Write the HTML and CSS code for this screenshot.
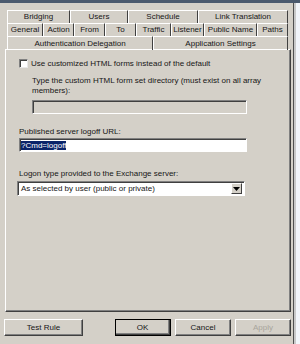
FILE: index.html
```html
<!DOCTYPE html>
<html>
<head>
    <meta charset="UTF-8">
    <title>Application Settings</title>
    <link rel="stylesheet" href="styles.css">
</head>
<body>
    <div class="titlebar"></div>
    <div class="screen">
        <div class="dialog">
            <div class="tabs">
                <div class="tabrow">
                    <div class="tab t-bridging">Bridging</div>
                    <div class="tab t-users">Users</div>
                    <div class="tab t-schedule">Schedule</div>
                    <div class="tab t-link">Link Translation</div>
                </div>
                <div class="tabrow">
                    <div class="tab t-general">General</div>
                    <div class="tab t-action">Action</div>
                    <div class="tab t-from">From</div>
                    <div class="tab t-to">To</div>
                    <div class="tab t-traffic">Traffic</div>
                    <div class="tab t-listener">Listener</div>
                    <div class="tab t-public">Public Name</div>
                    <div class="tab t-paths">Paths</div>
                </div>
                <div class="tabrow front">
                    <div class="tab t-auth">Authentication Delegation</div>
                    <div class="tab t-app selected">Application Settings</div>
                </div>
            </div>
            <div class="panel">
                <div class="check-row">
                    <span class="checkbox"></span>
                    <span>Use customized HTML forms instead of the default</span>
                </div>
                <div class="indent">
                    <p class="hint">Type the custom HTML form set directory (must exist on all array members):</p>
                    <div class="textbox disabled"></div>
                </div>
                <p class="label logoff-label">Published server logoff URL:</p>
                <div class="textbox logoff"><span class="selection">?Cmd=logoff</span></div>
                <p class="label logon-label">Logon type provided to the Exchange server:</p>
                <div class="combo">
                    <span class="combo-text">As selected by user (public or private)</span>
                    <span class="combo-btn">
                        <svg width="7" height="4" viewBox="0 0 7 4"><path d="M0 0h7L3.5 4z" fill="#000"/></svg>
                    </span>
                </div>
            </div>
            <div class="buttons">
                <button class="btn test">Test Rule</button>
                <div class="right-buttons">
                    <button class="btn default">OK</button>
                    <button class="btn">Cancel</button>
                    <button class="btn" disabled>Apply</button>
                </div>
            </div>
        </div>
        <div class="side"></div>
    </div>
</body>
</html>
```

FILE: styles.css
```css
* {
    box-sizing: border-box;
}

body {
    margin: 0;
    width: 300px;
    height: 344px;
    overflow: hidden;
    background: #d4d0c8;
    font-family: "Liberation Sans", Arial, sans-serif;
    font-size: 8px;
    color: #161616;
}

.titlebar {
    height: 3px;
    background: #4b5a6e;
}

.screen {
    display: flex;
    height: 341px;
}

.dialog {
    width: 293px;
    padding: 7px 0 0 5px;
}

.side {
    flex: 1;
    border-left: 1px solid #505050;
    background: linear-gradient(to right, #c9c9c9 0 2px, #f2f5fa 2px);
}

/* tabs */
.tabs {
    padding-left: 2px;
}

.tabrow {
    display: flex;
    height: 13px;
}

.tab {
    height: 13px;
    line-height: 12px;
    text-align: center;
    white-space: nowrap;
    border-top: 1px solid #fff;
    border-left: 1px solid #fff;
    border-right: 1px solid #404040;
}

.t-bridging { width: 63px; }
.t-users { width: 58px; }
.t-schedule { width: 70px; }
.t-link { width: 90px; }

.t-general { width: 36px; }
.t-action { width: 31px; }
.t-from { width: 31px; }
.t-to { width: 31px; }
.t-traffic { width: 35px; }
.t-listener { width: 33px; }
.t-public { width: 53px; }
.t-paths { width: 31px; }

.t-auth { width: 146px; }
.t-app { width: 135px; }

.front .tab {
    height: 14px;
    line-height: 13px;
}

/* panel */
.panel {
    height: 263px;
    margin-right: 2px;
    border: 1px solid;
    border-color: #fff #404040 #404040 #fff;
    box-shadow: inset -1px -1px #808080;
    padding: 8px 0 0 13px;
}

.check-row {
    display: flex;
    align-items: center;
    gap: 3px;
    height: 10px;
}

.checkbox {
    width: 9px;
    height: 9px;
    background: #fff;
    border: 1px solid;
    border-color: #808080 #e8e8e8 #e8e8e8 #808080;
    box-shadow: inset 1px 1px #404040;
}

.indent {
    padding-left: 13px;
}

p {
    margin: 0;
}

.hint {
    margin-top: 8px;
    width: 235px;
    line-height: 10px;
}

.textbox {
    height: 14px;
    border: 1px solid;
    border-color: #808080 #fff #fff #808080;
    box-shadow: inset 1px 1px #404040;
    background: #fff;
    padding: 2px 1px;
    line-height: 10px;
}

.textbox.disabled {
    margin-top: 4px;
    width: 215px;
    background: #d4d0c8;
}

.logoff-label {
    margin-top: 13px;
    line-height: 10px;
}

.textbox.logoff {
    margin-top: 1px;
    width: 228px;
}

.selection {
    background: #0a246a;
    color: #fff;
}

.logon-label {
    margin-top: 17px;
    line-height: 10px;
}

.combo {
    display: flex;
    align-items: center;
    margin-top: 2px;
    margin-left: -2px;
    width: 228px;
    height: 15px;
    border: 1px solid;
    border-color: #808080 #fff #fff #808080;
    box-shadow: inset 1px 1px #404040;
    background: #fff;
    padding: 2px 2px 2px 3px;
}

.combo-text {
    flex: 1;
}

.combo-btn {
    display: flex;
    align-items: center;
    justify-content: center;
    width: 11px;
    height: 11px;
    background: #d4d0c8;
    border: 1px solid;
    border-color: #fff #404040 #404040 #fff;
}

/* bottom buttons */
.buttons {
    display: flex;
    justify-content: space-between;
    margin-top: 7px;
    padding-right: 2px;
}

.right-buttons {
    display: flex;
    gap: 4px;
}

.btn {
    height: 17px;
    width: 56px;
    padding: 0;
    font: inherit;
    color: #161616;
    background: #d4d0c8;
    border: 1px solid;
    border-color: #fff #404040 #404040 #fff;
    box-shadow: inset -1px -1px #808080;
}

.btn.test {
    width: 79px;
    margin-left: -1px;
}

.btn.default {
    outline: 1px solid #000;
    outline-offset: -1px;
    border-width: 1px 2px 2px 1px;
}

.btn:disabled {
    color: #a8a59c;
}
```
